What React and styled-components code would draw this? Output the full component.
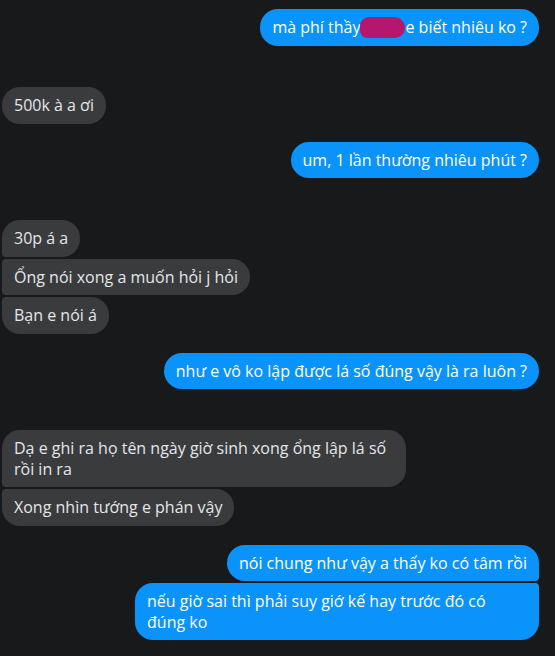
import React from 'react';
import styled, { createGlobalStyle, css } from 'styled-components';

const GlobalStyle = createGlobalStyle`
  html, body {
    margin: 0;
    padding: 0;
    background: #18191a;
  }
  body {
    font-family: "Open Sans", "Noto Sans", "Liberation Sans", sans-serif;
  }
`;

const Thread = styled.div`
  width: 555px;
  height: 656px;
  overflow: hidden;
  background: #18191a;
  padding: 9px 16px 0 2px;
  box-sizing: border-box;
  display: flex;
  flex-direction: column;
`;

const Group = styled.div`
  display: flex;
  flex-direction: column;
  align-items: ${(p) => (p.$mine ? 'flex-end' : 'flex-start')};
  gap: 2px;
  margin-top: ${(p) => p.$gap}px;

  &:first-child {
    margin-top: 0;
  }
`;

const Bubble = styled.div`
  box-sizing: border-box;
  max-width: 404px;
  padding: 8px 12px;
  font-size: 16px;
  line-height: 20.5px;
  border-radius: 18px;
  ${(p) =>
    p.$mine
      ? css`
          background: #0a93fb;
          color: #ffffff;
          border-top-right-radius: ${p.$first ? 18 : 4}px;
          border-bottom-right-radius: ${p.$last ? 18 : 4}px;
        `
      : css`
          background: #3a3b3c;
          color: #e4e6eb;
          border-top-left-radius: ${p.$first ? 18 : 4}px;
          border-bottom-left-radius: ${p.$last ? 18 : 4}px;
        `}
`;

const Scribble = styled.span`
  display: inline-block;
  width: 45px;
  height: 21px;
  vertical-align: -5px;
  background: #b5166e;
  border-radius: 9px 11px 10px 8px;
`;

const groups = [
  {
    mine: true,
    gap: 0,
    messages: [
      <>
        mà phí thầy<Scribble />e biết nhiêu ko ?
      </>,
    ],
  },
  { mine: false, gap: 41, messages: ['500k à a ơi'] },
  { mine: true, gap: 18, messages: ['um, 1 lần thường nhiêu phút ?'] },
  {
    mine: false,
    gap: 42,
    messages: ['30p á a', 'Ổng nói xong a muốn hỏi j hỏi', 'Bạn e nói á'],
  },
  { mine: true, gap: 19, messages: ['như e vô ko lập được lá số đúng vậy là ra luôn ?'] },
  {
    mine: false,
    gap: 41,
    messages: [
      'Dạ e ghi ra họ tên ngày giờ sinh xong ổng lập lá số rồi in ra',
      'Xong nhìn tướng e phán vậy',
    ],
  },
  {
    mine: true,
    gap: 19,
    messages: [
      'nói chung như vậy a thấy ko có tâm rồi',
      'nếu giờ sai thì phải suy giớ kế hay trước đó có đúng ko',
    ],
  },
];

export default function App() {
  return (
    <>
      <GlobalStyle />
      <Thread>
        {groups.map((g, i) => (
          <Group key={i} $mine={g.mine} $gap={g.gap}>
            {g.messages.map((m, j) => (
              <Bubble
                key={j}
                $mine={g.mine}
                $first={j === 0}
                $last={j === g.messages.length - 1}
              >
                {m}
              </Bubble>
            ))}
          </Group>
        ))}
      </Thread>
    </>
  );
}
